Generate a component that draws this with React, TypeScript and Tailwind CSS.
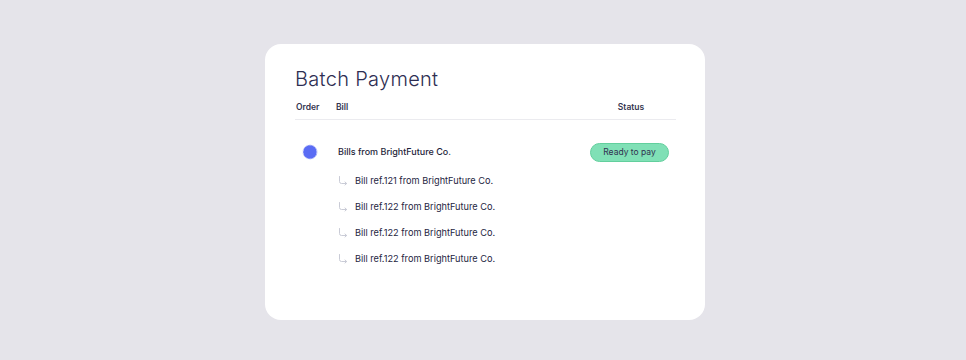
import React from "react";

const Arrow = () => (
  <svg width="11" height="10" viewBox="0 0 11 10" fill="none" className="shrink-0">
    <path d="M1.5 0.5 V5.5 Q1.5 7.5 3.5 7.5 H8.5" stroke="#c9cbd6" strokeWidth="1" strokeLinecap="round" />
    <path d="M7 6 L8.7 7.5 L7 9" stroke="#c9cbd6" strokeWidth="1" strokeLinecap="round" strokeLinejoin="round" />
  </svg>
);

const subs = [
  "Bill ref.121 from BrightFuture Co.",
  "Bill ref.122 from BrightFuture Co.",
  "Bill ref.122 from BrightFuture Co.",
  "Bill ref.122 from BrightFuture Co.",
];

export default function App() {
  return (
    <div
      className="w-[966px] h-[360px] bg-[#e5e4ea] flex pl-[265px] pt-[44px]"
      style={{ fontFamily: "Inter, 'Liberation Sans', sans-serif" }}
    >
      <div className="w-[440px] h-[276px] bg-white rounded-[16px] px-[30px] pt-[21px]">
        <h1 className="text-[20px] leading-[28px] font-light text-[#2e2e52] tracking-[0.3px]">
          Batch Payment
        </h1>
        <div className="mt-[4px] flex items-center h-[20px] text-[8.5px] font-semibold text-[#34344f] border-b border-[#ebebef] w-[381px] pb-[2px] box-content">
          <span className="w-[41px] pl-[1px]">Order</span>
          <span className="flex-1">Bill</span>
          <span className="w-[90px] text-center">Status</span>
        </div>
        <div className="mt-[22px] flex items-center h-[20px]">
          <div className="w-[43px] flex pl-[7px]">
            <svg width="16" height="16" viewBox="0 0 16 16">
              <circle cx="8" cy="8" r="7" fill="#5a6cf4" />
              <circle cx="8" cy="8" r="7" fill="none" stroke="#c8cdfa" strokeWidth="1" strokeDasharray="2 1.2" />
            </svg>
          </div>
          <span className="flex-1 text-[9px] font-medium text-[#1f1f3b]">Bills from BrightFuture Co.</span>
          <span className="w-[79px] h-[19px] rounded-full bg-[#80e0b6] border border-[#62cf9d] text-[8.5px] text-[#303050] flex items-center justify-center mr-[6px]">
            Ready to pay
          </span>
        </div>
        <div className="mt-[12px] flex flex-col gap-[12px] pl-[43px]">
          {subs.map((s, i) => (
            <div key={i} className="flex items-center gap-[6px] h-[14px]">
              <Arrow />
              <span className="text-[9.2px] text-[#26263f]">{s}</span>
            </div>
          ))}
        </div>
      </div>
    </div>
  );
}
